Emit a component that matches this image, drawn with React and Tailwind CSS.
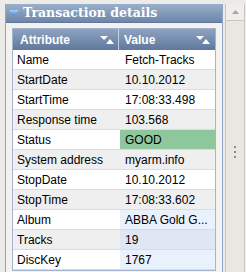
import React from "react";

const rows = [
  ["Name", "Fetch-Tracks"],
  ["StartDate", "10.10.2012"],
  ["StartTime", "17:08:33.498"],
  ["Response time", "103.568"],
  ["Status", "GOOD", "status"],
  ["System address", "myarm.info"],
  ["StopDate", "10.10.2012"],
  ["StopTime", "17:08:33.602"],
  ["Album", "ABBA Gold G...", "album"],
  ["Tracks", "19", "album"],
  ["DiscKey", "1767", "album"],
];

const SortIcon = () => (
  <svg width="14" height="8" viewBox="0 0 14 8">
    <polygon points="0,0 8,0 4,4" fill="#ffffff" />
    <polygon points="6,8 14,8 10,3" fill="#ffffff" />
  </svg>
);

const valueBg = (kind, odd) => {
  if (kind === "status") return "bg-[#8ec79c]";
  if (kind === "album") return odd ? "bg-[#dfe7f5]" : "bg-[#e9f1fd]";
  return "";
};

export default function App() {
  return (
    <div
      className="w-[246px] h-[272px] bg-[#edebe7] flex overflow-hidden text-black"
      style={{ fontFamily: "'Liberation Sans', Arial, sans-serif" }}
    >
      <div className="ml-[5px] mt-[4px] w-[218px] flex flex-col border-x border-[#90a5c3] bg-[#f3f2f0]">
        <div className="h-[19px] flex items-center bg-gradient-to-b from-[#9aafcb] to-[#6d86a9] border-b border-[#5f779b]">
          <svg width="10" height="7" viewBox="0 0 10 7" className="ml-[3px] mr-[4px]">
            <defs>
              <linearGradient id="tg" x1="0" y1="0" x2="0" y2="1">
                <stop offset="0" stopColor="#a9d0ff" />
                <stop offset="1" stopColor="#3d86e0" />
              </linearGradient>
            </defs>
            <polygon points="0,0 10,0 5,6" fill="url(#tg)" />
          </svg>
          <span
            className="text-white font-bold text-[12.5px] leading-none"
            style={{ fontFamily: "'DejaVu Serif', serif" }}
          >
            Transaction details
          </span>
        </div>
        <div className="px-[6px] pt-[5px]">
          <div className="border border-[#a4b6cf] bg-white">
            <div className="flex h-[21px] bg-gradient-to-b from-[#8ea3c1] to-[#5f789c] text-white font-bold text-[12px]">
              <div className="w-[106px] flex items-center justify-between pl-[7px] pr-[4px] border-r border-[#c5d1e2]">
                <span>Attribute</span>
                <SortIcon />
              </div>
              <div className="flex-1 flex items-center justify-between pl-[5px] pr-[5px]">
                <span>Value</span>
                <SortIcon />
              </div>
            </div>
            {rows.map(([k, v, kind], i) => {
              const odd = i % 2 === 1;
              return (
                <div
                  key={k}
                  className={`flex h-[20px] text-[12px] border-b border-[#d6dde7] ${odd ? "bg-[#efefef]" : "bg-white"}`}
                >
                  <div className="w-[107px] flex items-center pl-[4px]">{k}</div>
                  <div className={`flex-1 flex items-center pl-[5px] ${valueBg(kind, odd)}`}>{v}</div>
                </div>
              );
            })}
          </div>
        </div>
      </div>
      <div className="ml-[2px] mt-[4px] w-[20px] flex flex-col border-x border-[#c9c6bf] bg-[#e9e7e2]">
        <div className="h-[17px] flex items-center justify-center border-b border-[#c9c6bf] bg-[#efeeea]">
          <svg width="7" height="4" viewBox="0 0 7 4">
            <polygon points="0,4 7,4 3.5,0" fill="#a8a59e" />
          </svg>
        </div>
        <div className="flex-1 flex items-center justify-center">
          <div className="flex flex-col gap-[3px] mt-[10px]">
            <div className="w-[2px] h-[2px] bg-[#8f8c86]" />
            <div className="w-[2px] h-[2px] bg-[#8f8c86]" />
            <div className="w-[2px] h-[2px] bg-[#8f8c86]" />
          </div>
        </div>
      </div>
    </div>
  );
}
